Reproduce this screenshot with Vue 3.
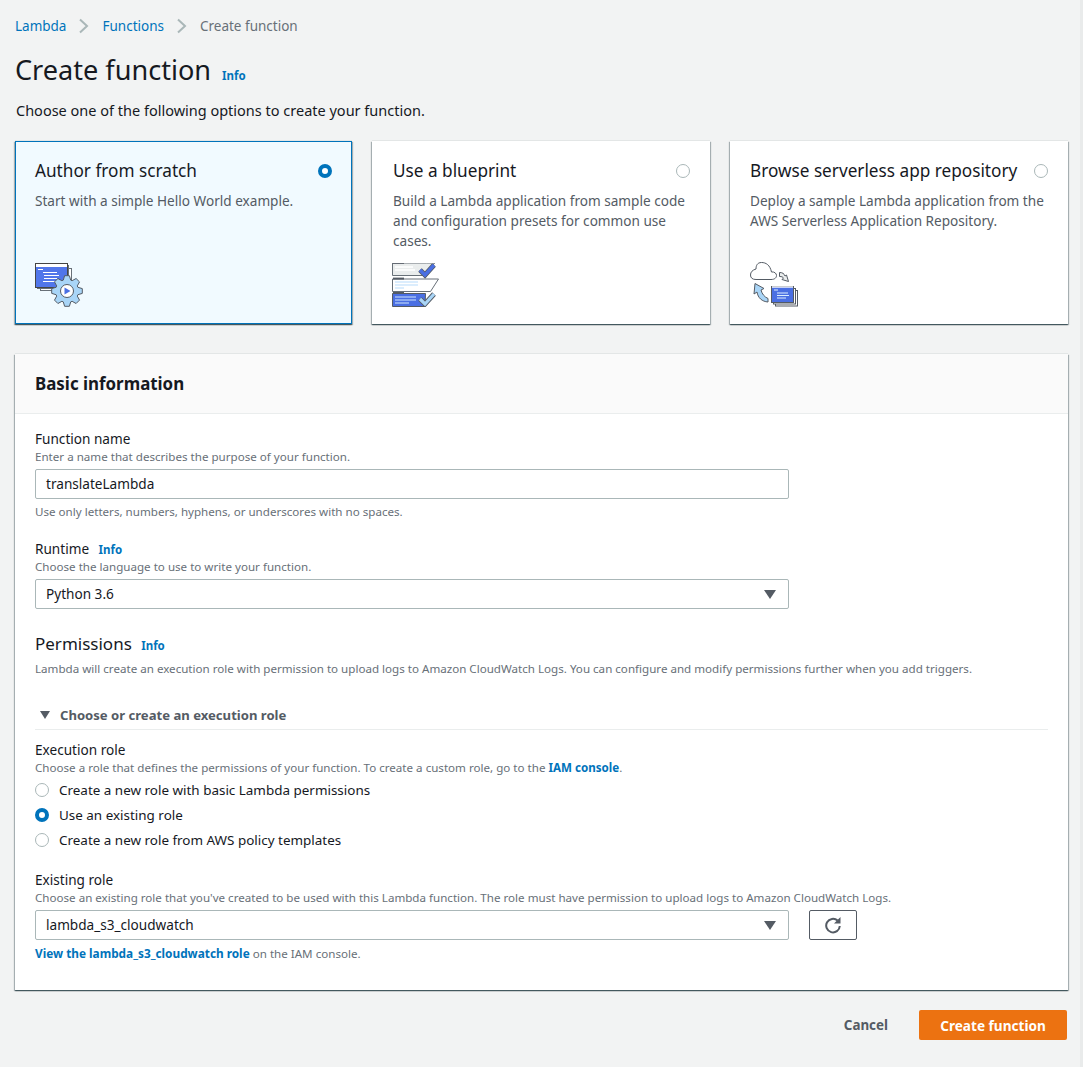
<template>
  <div class="page">
    <nav class="crumbs">
      <a>Lambda</a>
      <svg class="sep" width="11" height="16" viewBox="0 0 11 16"><path d="M2 1.500 9 8l-7 6.500" fill="none" stroke="#aab7b8" stroke-width="2" /></svg>
      <a>Functions</a>
      <svg class="sep" width="11" height="16" viewBox="0 0 11 16"><path d="M2 1.500 9 8l-7 6.500" fill="none" stroke="#aab7b8" stroke-width="2" /></svg>
      <span>Create function</span>
    </nav>

    <div class="title-row">
      <h1>Create function</h1>
      <a class="info">Info</a>
    </div>
    <p class="lead">Choose one of the following options to create your function.</p>

    <div class="cards">
      <div v-for="(card, i) in cards" :key="card.title" class="card" :class="{ selected: selected === i }">
        <div class="card-head">
          <h3>{{ card.title }}</h3>
          <span class="radio" :class="{ on: selected === i }"></span>
        </div>
        <p>{{ card.text }}</p>
        <div class="card-icon">
          <svg v-if="i === 0" width="48" height="44" viewBox="0 0 48 44">
            <rect x="5.500" y="5.500" width="31" height="22" fill="#fff" stroke="#687078" />
            <rect x="2.500" y="2.500" width="31" height="23" fill="#fff" stroke="#687078" />
            <rect x="0.500" y="0.500" width="32" height="24" fill="#5176ea" stroke="#444" />
            <rect x="1" y="1" width="31" height="3" fill="#fff" />
            <path d="M3 6.500h5M8 9.500h14M9 12.500h15M9 15.500h13M8 18.500h16" stroke="#fff" stroke-width="1" />
            <path :d="gearPath" fill="#a9d5f7" stroke="#545b64" />
            <circle cx="32" cy="28" r="6.500" fill="#fff" stroke="#545b64" />
            <path d="M29.500 24.500v7l6-3.500z" fill="#4a6fe3" />
          </svg>
          <svg v-else-if="i === 1" width="48" height="44" viewBox="0 1 48 44">
            <path d="M.5 1h34l8 0-8 12.500H.5z" fill="#eaeded" stroke="#687078" />
            <path d="M1 .8h11" stroke="#545b64" stroke-width="2" />
            <path d="M3 5h18M3 8h20" stroke="#fff" stroke-width="1.500" />
            <path d="m28 8 5 5 9-10" fill="none" stroke="#545b64" stroke-width="5" />
            <path d="m28 8 5 5 9-10" fill="none" stroke="#4a6fe3" stroke-width="3.400" />
            <path d="M.5 17h46l-8 12.500H.5z" fill="#fff" stroke="#687078" />
            <path d="M1 16.600h11" stroke="#545b64" stroke-width="2" />
            <path d="M3 20h23M3 23h23M3 26h9" stroke="#cfe8fd" stroke-width="1.400" />
            <path d="M.5 31.500h33l-.5 13H.5z" fill="#4a6fe3" stroke="#545b64" />
            <path d="M1 31h11" stroke="#545b64" stroke-width="2" />
            <path d="M3 35h21M3 38h21M3 41h14" stroke="#cfe8fd" stroke-width="1" />
            <path d="m28 37 5 5 9-10" fill="none" stroke="#545b64" stroke-width="5" />
            <path d="m28 37 5 5 9-10" fill="none" stroke="#a9d5f7" stroke-width="3.200" />
          </svg>
          <svg v-else width="50" height="45" viewBox="0 0 50 45">
            <path d="M6 17.500h15c4 0 5.500-2 5.500-4s-2-4-5-3.500C20 3 16 .5 11.500.5 7 .5 6 4 6 7 2.500 8 .5 10 .5 13c0 3 2 4.500 5.500 4.500z" fill="#fff" stroke="#545b64" />
            <path d="M29.500 10.500c3 0 4.500 1 5.500 3.500l1.500-1 2 6.500-6.500-2 1.500-1.500c-.7-1-1.500-1.500-4-1.500z" fill="#eaeded" stroke="#545b64" />
            <path d="M18 40c-6-.5-10-4-11-10l-3 2 1-10.500 9 5-3 1.500c1 4 3.500 7 7 8.500z" fill="#a9d5f7" stroke="#545b64" />
            <rect x="25.500" y="28.500" width="22" height="15.500" fill="#fff" stroke="#545b64" />
            <rect x="23.500" y="26.500" width="22" height="15.500" fill="#fff" stroke="#545b64" />
            <rect x="21.500" y="24.500" width="22" height="16" fill="#4a6fe3" stroke="#545b64" />
            <path d="M22 25h21" stroke="#fff" stroke-width="1.400" />
            <path d="M24 28h4M27 31h11M27 33.500h12M27 36h9" stroke="#dcefff" stroke-width="1" />
          </svg>
        </div>
      </div>
    </div>

    <section class="panel">
      <header class="panel-head">Basic information</header>
      <div class="panel-body">
        <div class="field name-field">
          <label>Function name</label>
          <small>Enter a name that describes the purpose of your function.</small>
          <div class="input">translateLambda</div>
          <small class="after">Use only letters, numbers, hyphens, or underscores with no spaces.</small>
        </div>

        <div class="field runtime-field">
          <label>Runtime <a class="info">Info</a></label>
          <small>Choose the language to use to write your function.</small>
          <div class="input select">Python 3.6<i class="caret"></i></div>
        </div>

        <h4 class="perm-title">Permissions <a class="info">Info</a></h4>
        <small class="perm-text">Lambda will create an execution role with permission to upload logs to Amazon CloudWatch Logs. You can configure and modify permissions further when you add triggers.</small>

        <div class="expander"><i class="caret"></i>Choose or create an execution role</div>

        <div class="field role-field">
          <label>Execution role</label>
          <small>Choose a role that defines the permissions of your function. To create a custom role, go to the <a class="link">IAM console</a>.</small>
          <div class="radios">
            <div v-for="(opt, i) in roleOptions" :key="opt" class="radio-row">
              <span class="radio" :class="{ on: roleChoice === i }"></span>{{ opt }}
            </div>
          </div>
        </div>

        <div class="field existing-field">
          <label>Existing role</label>
          <small>Choose an existing role that you've created to be used with this Lambda function. The role must have permission to upload logs to Amazon CloudWatch Logs.</small>
          <div class="select-row">
            <div class="input select">lambda_s3_cloudwatch<i class="caret"></i></div>
            <button class="refresh">
              <svg width="18" height="18" viewBox="0 0 18 18"><path d="M13.600 4.600A6.800 6.800 0 1 0 15.800 10" fill="none" stroke="#545b64" stroke-width="2" /><path d="M16.500 1v6.500H10z" fill="#545b64" /></svg>
            </button>
          </div>
          <small class="after"><a class="link">View the lambda_s3_cloudwatch role</a> on the IAM console.</small>
        </div>
      </div>
    </section>

    <div class="actions">
      <a class="cancel">Cancel</a>
      <button class="primary">Create function</button>
    </div>
  </div>
</template>

<script setup>
import { ref } from 'vue'

const selected = ref(0)
const roleChoice = ref(1)

const cards = [
  { title: 'Author from scratch', text: 'Start with a simple Hello World example.' },
  { title: 'Use a blueprint', text: 'Build a Lambda application from sample code and configuration presets for common use cases.' },
  { title: 'Browse serverless app repository', text: 'Deploy a sample Lambda application from the AWS Serverless Application Repository.' }
]

const roleOptions = [
  'Create a new role with basic Lambda permissions',
  'Use an existing role',
  'Create a new role from AWS policy templates'
]

// 8 tooth gear round the play button
const gearPath = (() => {
  const pts = []
  for (let i = 0; i < 8; i++) {
    const a = (i * Math.PI) / 4
    const step = Math.PI / 4
    const at = (r, t) => `${(32 + r * Math.sin(t)).toFixed(1)} ${(28 - r * Math.cos(t)).toFixed(1)}`
    pts.push(at(11.5, a - step * 0.42), at(15.5, a - step * 0.2), at(15.5, a + step * 0.2), at(11.5, a + step * 0.42))
  }
  return 'M' + pts.join('L') + 'z'
})()
</script>

<style>
html, body {
  background: #f2f3f3;
}
</style>

<style scoped>
.page {
  box-sizing: border-box;
  height: 1067px;
  padding: 0 12px 0 15px;
  background: #f2f3f3;
  border-right: 3px solid #e9ebeb;
  width: 1083px;
  font-family: "Noto Sans", sans-serif;
  font-size: 13.6px;
  color: #16191f;
  overflow: hidden;
}

.crumbs {
  display: flex;
  align-items: center;
  height: 20px;
  padding-top: 16px;
  font-size: 13.500px;
  color: #687078;
}

.crumbs a {
  color: #0073bb;
}

.sep {
  margin: 0 13px 0 12px;
}

.title-row {
  display: flex;
  align-items: baseline;
  margin-top: 9px;
}

h1 {
  margin: 0 11px 0 0;
  font-size: 27.100px;
  font-weight: 400;
  line-height: 50px;
}

.info {
  color: #0073bb;
  font-size: 11.500px;
  font-weight: 700;
}

.lead {
  margin: 5px 0 0 1px;
  font-size: 14.500px;
  line-height: 20px;
}

.cards {
  display: grid;
  grid-template-columns: 337px 338px 338px;
  gap: 20px;
  margin-top: 21px;
}

.card {
  box-sizing: border-box;
  height: 183px;
  padding: 19px 20px 0;
  position: relative;
  background: #fff;
  box-shadow: 0 1px 1px 0 rgba(0, 28, 36, 0.5), 1px 1px 1px 0 rgba(0, 28, 36, 0.25), -1px 1px 1px 0 rgba(0, 28, 36, 0.25), 0 -1px 0 0 #e3e6e6;
}

.card:nth-child(2) {
  padding-left: 21px;
}

.card.selected {
  background: #f1faff;
  outline: 1px solid #0073bb;
  outline-offset: -1px;
}

.card-head {
  display: flex;
  justify-content: space-between;
  align-items: center;
}

.card h3 {
  margin: 0;
  font-size: 17.200px;
  font-weight: 400;
  line-height: 22px;
}

.card p {
  margin: 9px 0 0;
  color: #545b64;
  font-size: 13.600px;
  line-height: 20px;
}

.card-icon {
  position: absolute;
  left: 20px;
  bottom: 17px;
  line-height: 0;
}

.radio {
  flex: none;
  box-sizing: border-box;
  display: inline-block;
  width: 14px;
  height: 14px;
  border: 1px solid #aab7b8;
  border-radius: 50%;
  background: #fff;
}

.radio.on {
  border: 4px solid #0073bb;
}

.panel {
  margin-top: 30px;
  height: 636px;
  background: #fff;
  box-shadow: 0 1px 1px 0 rgba(0, 28, 36, 0.5), 1px 1px 1px 0 rgba(0, 28, 36, 0.25), -1px 1px 1px 0 rgba(0, 28, 36, 0.25), 0 -1px 0 0 #e3e6e6;
}

.panel-head {
  box-sizing: border-box;
  height: 60px;
  padding: 0 20px;
  line-height: 59px;
  background: #fafafa;
  border-bottom: 1px solid #eaeded;
  font-size: 16.900px;
  font-weight: 700;
}

.panel-body {
  padding: 16px 20px 0;
}

.field label {
  display: block;
  margin-bottom: 2px;
  line-height: 17px;
}

small {
  display: block;
  color: #687078;
  font-size: 11.600px;
  line-height: 16px;
}

.input {
  box-sizing: border-box;
  position: relative;
  width: 754px;
  height: 30px;
  margin-top: 4px;
  padding: 0 10px;
  line-height: 28px;
  background: #fff;
  border: 1px solid #aab7b8;
  border-radius: 2px;
}

.caret {
  display: inline-block;
  width: 0;
  height: 0;
  border-left: 6px solid transparent;
  border-right: 6px solid transparent;
  border-top: 9px solid #545b64;
}

.select .caret {
  position: absolute;
  right: 12px;
  top: 10px;
}

.after {
  margin-top: 5px;
}

.runtime-field {
  margin-top: 19px;
}

.runtime-field label {
  margin-bottom: 0;
  line-height: 19px;
}

.runtime-field .info {
  margin-left: 6px;
}

.perm-title {
  margin: 23px 0 0;
  font-size: 17px;
  font-weight: 400;
  line-height: 24px;
}

.perm-title .info {
  margin-left: 5px;
}

.perm-text {
  margin-top: 3px;
}

.expander {
  display: flex;
  align-items: center;
  height: 28px;
  margin-top: 24px;
  padding-left: 5px;
  color: #545b64;
  font-weight: 700;
  font-size: 13.100px;
  border-bottom: 1px solid #eaeded;
}

.expander .caret {
  margin-right: 10px;
  border-left-width: 5px;
  border-right-width: 5px;
  border-top-width: 8px;
}

.role-field {
  margin-top: 11px;
}

.radios {
  margin-top: 1px;
}

.link {
  color: #0073bb;
  font-weight: 700;
}

.after .link {
  font-size: 11.800px;
}

.radio-row {
  display: flex;
  align-items: center;
  height: 25px;
  font-size: 13.450px;
}

.radio-row .radio {
  margin-right: 10px;
}

.existing-field {
  margin-top: 19px;
}

.select-row {
  display: flex;
  align-items: flex-start;
}

.refresh {
  box-sizing: border-box;
  width: 48px;
  height: 30px;
  margin: 4px 0 0 20px;
  padding: 0;
  display: flex;
  align-items: center;
  justify-content: center;
  background: #fff;
  border: 1px solid #545b64;
  border-radius: 2px;
}

.actions {
  display: flex;
  justify-content: flex-end;
  align-items: center;
  margin: 20px 1px 0 0;
}

.cancel {
  margin-right: 31px;
  color: #545b64;
  font-size: 13.400px;
  font-weight: 700;
}

.primary {
  box-sizing: border-box;
  width: 148px;
  height: 30px;
  padding: 0;
  background: #ec7211;
  border: none;
  border-radius: 2px;
  color: #fff;
  font: inherit;
  font-weight: 700;
}
</style>
